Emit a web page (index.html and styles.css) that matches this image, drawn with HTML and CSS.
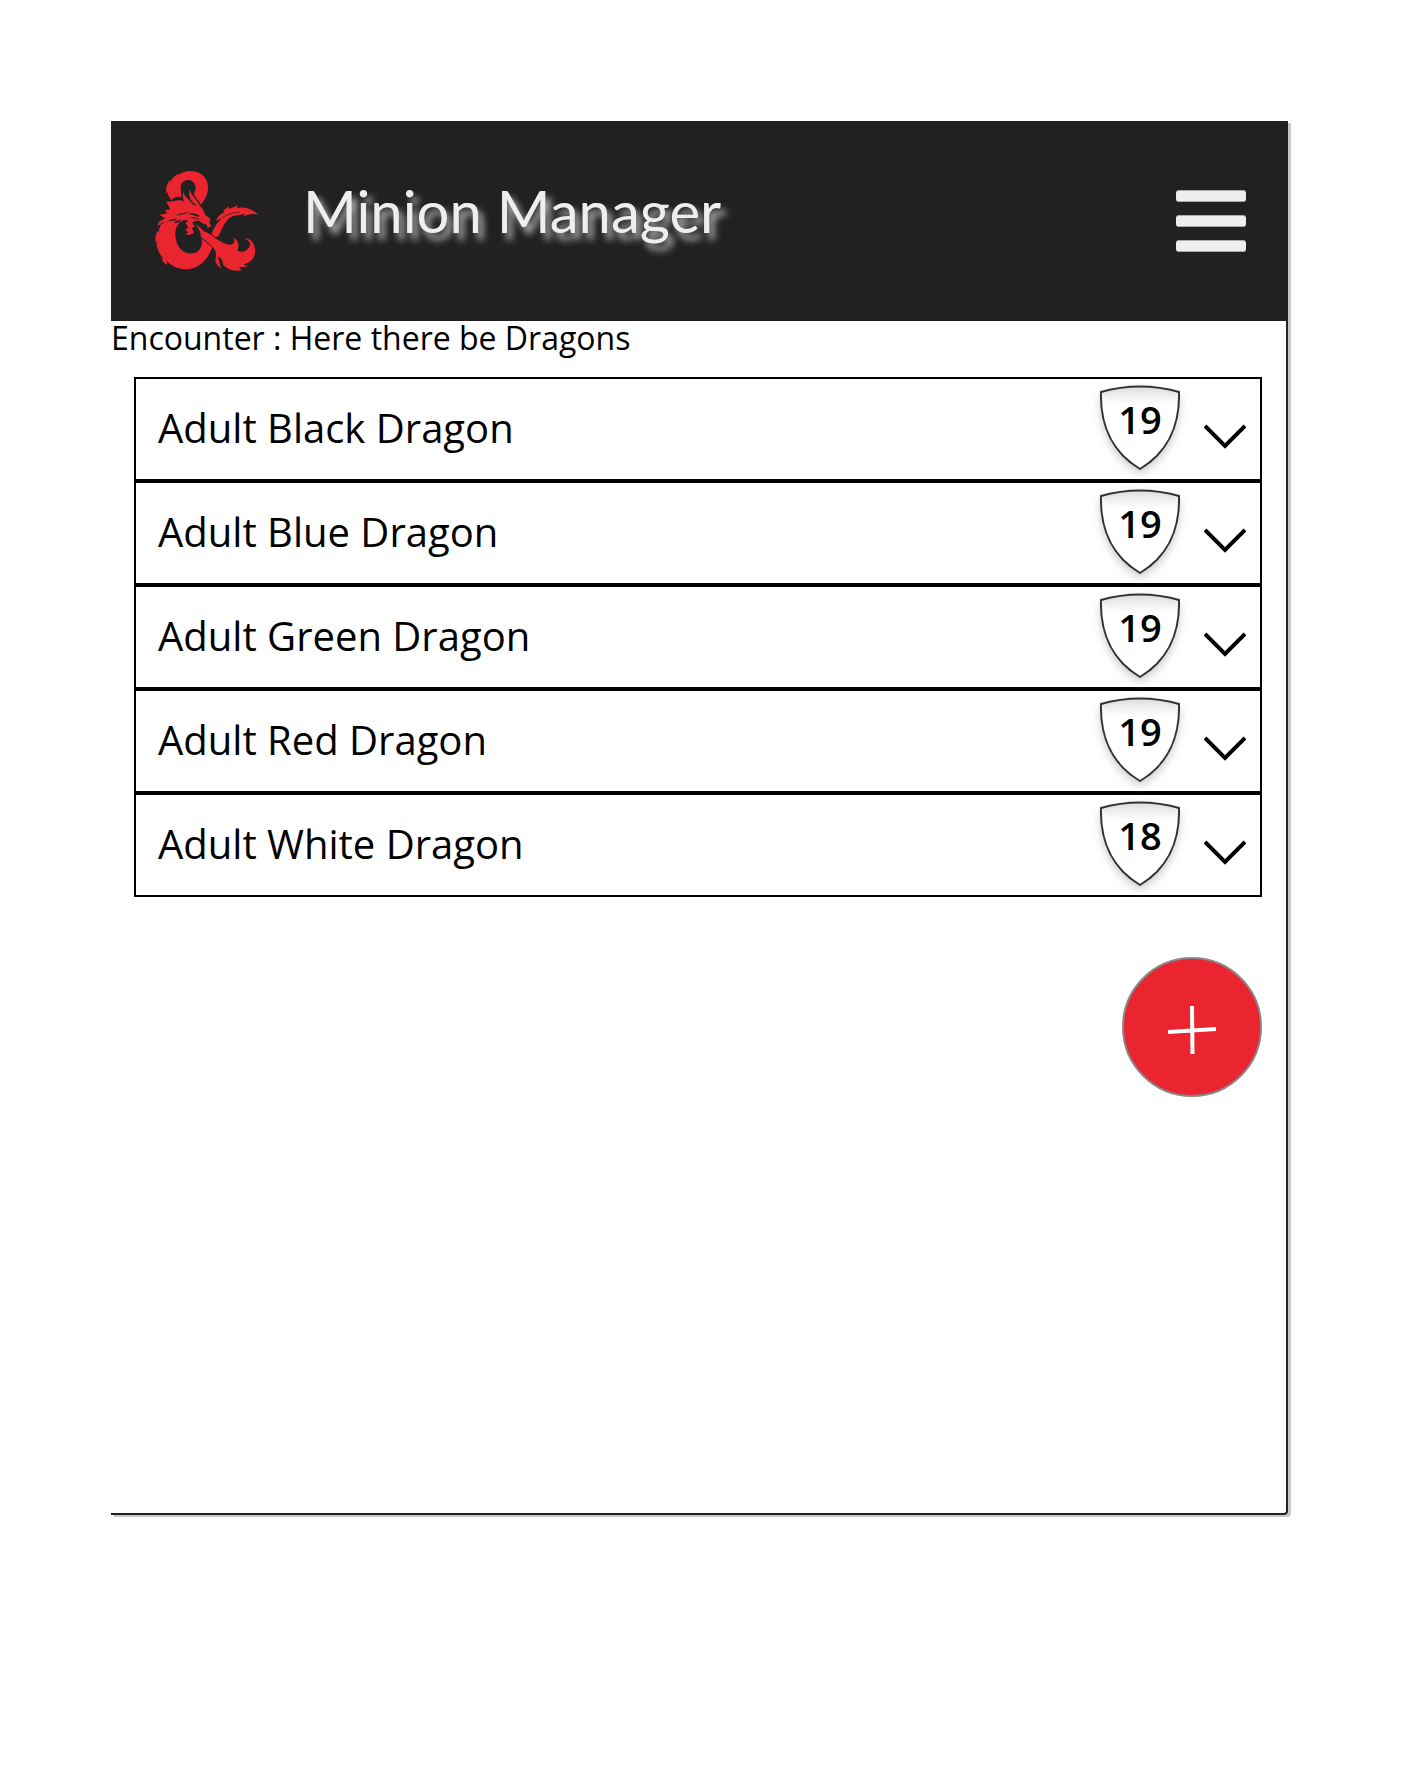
FILE: index.html
```
<!DOCTYPE html>
<html lang="en">
<head>
<meta charset="utf-8">
<meta name="viewport" content="width=device-width, initial-scale=1">
<title>Minion Manager</title>
<link rel="stylesheet" href="styles.css">
</head>
<body>
<svg class="sprites" aria-hidden="true">
  <symbol id="shield" viewBox="0 0 90 96">
    <path d="M6 11Q45 0 84 11C85 45 72 72 45 88C18 72 5 45 6 11Z" fill="url(#sheen)" stroke="#333" stroke-width="2"/>
  </symbol>
  <symbol id="chevron" viewBox="0 0 42 26">
    <path d="M1 2L21 22L41 2" fill="none" stroke="#000" stroke-width="4"/>
  </symbol>
  <linearGradient id="sheen" x1="0" y1="0" x2="0" y2="1">
    <stop offset="0" stop-color="#ddd"/>
    <stop offset=".22" stop-color="#fff"/>
  </linearGradient>
</svg>
<div class="app">
  <header class="bar">
    <svg class="logo" viewBox="45 45 312 310" role="img" aria-label="Dragon ampersand">
      <path fill="#ea2530" d="M94 138C87 128 82 120 84 110L79 119C76 99 82 84 91 76L90 87C94 72 105 62 119 58L114 64C127 50 149 47 170 53C192 60 205 78 204 101C203 122 193 140 182 151C177 139 166 131 161 119C166 112 168 103 166 96C163 84 156 77 145 77C131 77 122 87 122 100C122 110 124 118 125 128C113 126 101 129 94 138Z"/>
      <path fill="#ea2530" d="M148 105C155 127 174 137 181 158C162 152 143 137 148 105ZM130 112C134 129 149 136 160 151L142 153C130 142 126 129 130 112Z"/>
      <path fill="#ea2530" d="M78 141C92 145 105 137 121 138C134 140 143 146 151 150L181 156C188 161 190 172 197 183L211 193L208 205L214 214L203 222L200 211L190 208L179 201C171 197 164 201 157 204L164 217L155 222L163 235L148 242L137 240L145 234L136 226L145 219L137 207L145 198L131 198L119 204L122 196L104 201L111 193C94 193 77 201 67 213L72 201L53 216L57 202L75 192L58 181L82 177L75 168L91 165Z"/>
      <path fill="#212121" d="M144 180C155 174 168 178 179 184L174 188C167 184 157 181 144 180ZM108 184C123 174 134 179 146 171C138 182 126 180 108 184ZM151 190C163 187 172 191 181 197L173 195C166 192 158 192 151 190Z"/>
      <path fill="#ea2530" d="M62 211C74 202 92 198 108 199L102 207L121 203L114 211C101 229 104 261 119 281C136 302 166 302 178 286C188 275 188 256 180 242L217 279C204 316 176 344 139 345C114 346 93 335 79 318L83 331C72 328 67 320 64 310L71 314C57 299 49 280 49 258L46 264C45 251 47 239 53 229L55 236C56 227 60 219 62 211Z"/>
      <path fill="#ea2530" stroke="#212121" stroke-width="3" d="M161 205C176 214 184 221 192 230C205 232 217 244 230 253C245 261 264 274 277 268C287 263 278 252 277 248C293 253 302 270 294 288C307 296 324 287 328 274C331 263 322 254 305 253C331 244 347 267 347 292C345 313 332 326 313 331L329 334C315 342 305 340 299 338L307 349C281 355 260 346 247 330C247 318 241 310 235 309C240 320 239 331 247 345C230 337 224 325 225 311C231 295 221 281 211 273L181 247C181 231 175 224 161 205Z"/>
      <path fill="#ea2530" d="M214 239C222 220 230 207 242 194L228 199C233 187 241 178 254 173L249 170L267 155L265 163C276 159 287 158 293 151L291 162C309 155 335 162 354 180C340 177 323 179 307 187L315 179C300 182 285 181 273 188C256 199 249 218 235 246L225 249Z"/>
      <path fill="none" stroke="#212121" stroke-width="2" d="M236 200C252 184 270 175 300 173"/>
    </svg>
    <h1 class="title">Minion Manager</h1>
    <button class="menu" type="button" aria-label="Menu"><span></span><span></span><span></span></button>
  </header>
  <main>
    <h2 class="encounter">Encounter : Here there be Dragons</h2>
    <ul class="list">
      <li class="row"><span class="name">Adult Black Dragon</span><span class="armor"><svg class="shield" aria-hidden="true"><use href="#shield"/></svg><span class="score">19</span></span><button class="expand" type="button" aria-label="Show Adult Black Dragon"><svg class="chevron"><use href="#chevron"/></svg></button></li>
      <li class="row"><span class="name">Adult Blue Dragon</span><span class="armor"><svg class="shield" aria-hidden="true"><use href="#shield"/></svg><span class="score">19</span></span><button class="expand" type="button" aria-label="Show Adult Blue Dragon"><svg class="chevron"><use href="#chevron"/></svg></button></li>
      <li class="row"><span class="name">Adult Green Dragon</span><span class="armor"><svg class="shield" aria-hidden="true"><use href="#shield"/></svg><span class="score">19</span></span><button class="expand" type="button" aria-label="Show Adult Green Dragon"><svg class="chevron"><use href="#chevron"/></svg></button></li>
      <li class="row"><span class="name">Adult Red Dragon</span><span class="armor"><svg class="shield" aria-hidden="true"><use href="#shield"/></svg><span class="score">19</span></span><button class="expand" type="button" aria-label="Show Adult Red Dragon"><svg class="chevron"><use href="#chevron"/></svg></button></li>
      <li class="row"><span class="name">Adult White Dragon</span><span class="armor"><svg class="shield" aria-hidden="true"><use href="#shield"/></svg><span class="score">18</span></span><button class="expand" type="button" aria-label="Show Adult White Dragon"><svg class="chevron"><use href="#chevron"/></svg></button></li>
    </ul>
    <div class="actions">
      <button class="add" type="button" aria-label="Add minion">
        <svg class="plus" viewBox="0 0 48 48"><path d="M24 0L24.500 48M0 26L48 23" fill="none" stroke="#fff" stroke-width="4"/></svg>
      </button>
    </div>
  </main>
</div>
</body>
</html>
```
FILE: styles.css
```
* { box-sizing: border-box; }

body {
  margin: 0;
  padding: 121px 116px 263px 111px;
  background: #fff;
  color: #000;
  font-family: "Open Sans", "Noto Sans", sans-serif;
}

button {
  margin: 0;
  padding: 0;
  border: 0;
  background: none;
  cursor: pointer;
}

.sprites { position: absolute; width: 0; height: 0; }

.app {
  min-height: calc(100vh - 384px);
  border-right: 2px solid #222;
  border-bottom: 2px solid #222;
  border-bottom-right-radius: 4px;
  box-shadow: 3px 2px 0 #c8c8c8;
}

.bar {
  display: flex;
  align-items: center;
  height: 200px;
  padding: 0 40px 0 44px;
  background: #212121;
}

.logo { flex: none; width: 104px; height: 104px; }

.title {
  flex: 1;
  margin: 0 0 20px 44px;
  color: #efedf0;
  font: 400 58px/72px Papyrus, Lato, sans-serif;
  text-shadow: 5px 7px 7px #bbb;
}

.menu { display: grid; gap: 13px; width: 70px; }

.menu span {
  height: 12px;
  border: 1px solid #aaa;
  border-width: 1px 0;
  border-radius: 3px;
  background: #efedf0;
}

.encounter {
  margin: 0;
  font-size: 32px;
  font-weight: 400;
  line-height: 34px;
}

.list {
  margin: 22px 24px 0 23px;
  padding: 0;
  list-style: none;
}

.row {
  display: flex;
  align-items: center;
  height: 104px;
  padding: 0 14px 0 22px;
  border: 2px solid #000;
}

.name { flex: 1; padding-bottom: 2px; font-size: 40px; line-height: 56px; }

.armor {
  display: grid;
  flex: none;
  width: 90px;
  height: 96px;
  margin-right: 19px;
}

.armor > * { grid-area: 1 / 1; }

.shield {
  width: 90px;
  height: 96px;
  filter: drop-shadow(0 4px 4px #ccc);
}

.score {
  position: relative;
  padding-top: 12px;
  font-size: 38px;
  font-weight: 600;
  line-height: 52px;
  text-align: center;
}

.expand { flex: none; padding-top: 16px; }

.chevron { display: block; width: 42px; height: 26px; }

.actions {
  display: flex;
  justify-content: flex-end;
  padding: 60px 24px;
}

.add {
  display: grid;
  place-items: center;
  width: 140px;
  height: 140px;
  padding-top: 6px;
  border: 2px solid #888;
  border-radius: 50%;
  background: #ea2530;
}

.plus { width: 48px; height: 48px; }
```
